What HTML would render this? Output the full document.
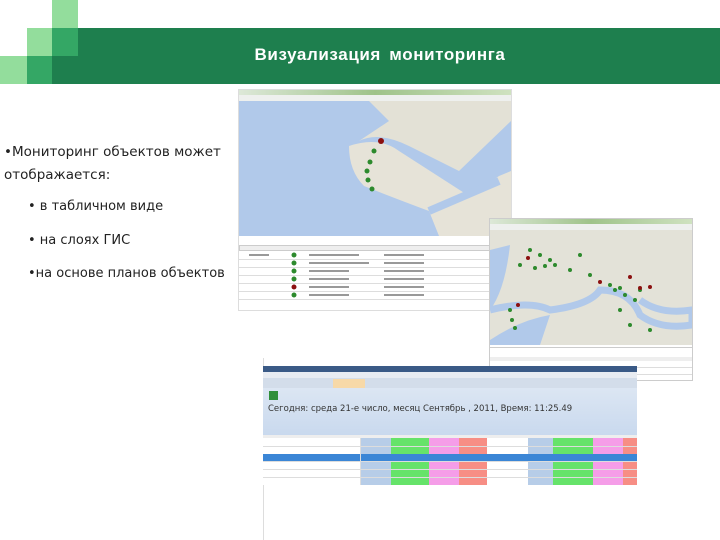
<!DOCTYPE html>
<html><head><meta charset="utf-8"><style>
*{margin:0;padding:0;box-sizing:border-box}
body{width:720px;height:540px;background:#fff;position:relative;overflow:hidden;font-family:"DejaVu Sans","Liberation Sans",sans-serif}
.a{position:absolute}
.t{position:absolute;font-size:13px;color:#222;white-space:nowrap}
.map{background:#dfe3d6}
.row{position:absolute;left:0;right:0;height:1px;background:#ddd}
</style></head><body>
<div class="a" style="left:52px;top:0;width:26px;height:28px;background:#93dd9c"></div>
<div class="a" style="left:27px;top:28px;width:25px;height:28px;background:#93dd9c"></div>
<div class="a" style="left:0;top:56px;width:27px;height:28px;background:#93dd9c"></div>
<div class="a" style="left:27px;top:56px;width:25px;height:28px;background:#34a765"></div>
<div class="a" style="left:52px;top:28px;width:668px;height:56px;background:#1e7f4e"></div>
<div class="a" style="left:52px;top:28px;width:26px;height:28px;background:#34a765"></div>
<div class="a" style="left:240px;top:45px;width:280px;text-align:center;color:#fff;font-family:'Liberation Sans',sans-serif;font-weight:bold;font-size:17px;letter-spacing:0.6px;word-spacing:3px">Визуализация мониторинга</div>

<div class="t" style="left:4px;top:144px;font-size:13.5px">•Мониторинг объектов может</div>
<div class="t" style="left:4px;top:167px;font-size:13.5px">отображается:</div>
<div class="t" style="left:28px;top:199px">• в табличном виде</div>
<div class="t" style="left:28px;top:233px">• на слоях ГИС</div>
<div class="t" style="left:28px;top:266px">•на основе планов объектов</div>

<!-- screenshot 1 -->
<div class="a" style="left:238px;top:89px;width:274px;height:222px;background:#fff;border:1px solid #ddd">
 <div class="a" style="left:0;top:0;width:272px;height:5px;background:linear-gradient(90deg,#dde8d8,#9fc38a,#cfe2c0)"></div>
 <div class="a" style="left:0;top:5px;width:272px;height:6px;background:#eef0ee"></div>
 <div class="a map" style="left:0;top:11px;width:272px;height:135px;background:#b1c9ea">
  <svg width="272" height="135" style="position:absolute;left:0;top:0"><path d="M120 40 Q140 30 170 45 L220 70 L272 20 L272 0 L130 0 L150 20Z" fill="#e3e1d6"/><path d="M110 45 Q140 35 160 50 L230 95 L260 75 L272 70 L272 135 L200 135 L190 110 Q150 95 125 85 Q110 70 110 45Z" fill="#e6e3d8"/><path d="M272 80 L200 135 L272 135Z" fill="#e6e3d8"/><path d="M190 110 L260 80" stroke="#b1c9ea" stroke-width="8" fill="none"/><circle cx="142" cy="40" r="3" fill="#8b1010"/><circle cx="135" cy="50" r="2.5" fill="#2d8a2d"/><circle cx="131" cy="61" r="2.5" fill="#2d8a2d"/><circle cx="128" cy="70" r="2.5" fill="#2d8a2d"/><circle cx="129" cy="79" r="2.5" fill="#2d8a2d"/><circle cx="133" cy="88" r="2.5" fill="#2d8a2d"/></svg>
 </div>
 <div class="a" style="left:0;top:155px;width:272px;height:6px;background:#eee;border:1px solid #ccc"></div>
 <div class="a" style="left:0;top:161px;width:272px;height:60px">
  <div class="row" style="top:8px"></div><div class="row" style="top:16px"></div><div class="row" style="top:24px"></div><div class="row" style="top:32px"></div><div class="row" style="top:40px"></div><div class="row" style="top:48px"></div>
  <svg width="272" height="60" style="position:absolute;left:0;top:0"><g fill="#2d8a2d"><circle cx="55" cy="4" r="2.5"/><circle cx="55" cy="12" r="2.5"/><circle cx="55" cy="20" r="2.5"/><circle cx="55" cy="28" r="2.5"/><circle cx="55" cy="44" r="2.5"/></g><circle cx="55" cy="36" r="2.5" fill="#8b1010"/><g fill="#999"><rect x="10" y="3" width="20" height="2"/><rect x="70" y="3" width="50" height="2"/><rect x="70" y="11" width="60" height="2"/><rect x="70" y="19" width="40" height="2"/><rect x="70" y="27" width="40" height="2"/><rect x="70" y="35" width="40" height="2"/><rect x="70" y="43" width="40" height="2"/><rect x="145" y="3" width="40" height="2"/><rect x="145" y="11" width="40" height="2"/><rect x="145" y="19" width="40" height="2"/><rect x="145" y="27" width="40" height="2"/><rect x="145" y="35" width="40" height="2"/><rect x="145" y="43" width="40" height="2"/></g></svg>
 </div>
</div>

<!-- screenshot 2 -->
<div class="a" style="left:489px;top:218px;width:204px;height:163px;background:#fff;border:1px solid #ccc">
 <div class="a" style="left:0;top:0;width:202px;height:5px;background:linear-gradient(90deg,#dde8d8,#9fc38a,#cfe2c0)"></div>
 <div class="a" style="left:0;top:5px;width:202px;height:6px;background:#eef0ee"></div>
 <div class="a" style="left:0;top:11px;width:202px;height:115px;background:#e3e2d8">
  <svg width="202" height="115" style="position:absolute;left:0;top:0"><path d="M0 20 L20 15 Q15 60 0 80Z" fill="#b1c9ea"/><path d="M0 80 Q40 70 60 80 Q100 75 110 60 Q140 60 150 85 Q170 100 202 95 L202 80 Q170 85 150 70" fill="none" stroke="#b1c9ea" stroke-width="7"/><path d="M0 110 Q30 90 60 85 L50 115 L0 115Z" fill="#b1c9ea"/><g fill="#2d8a2d"><circle cx="40" cy="20" r="2"/><circle cx="50" cy="25" r="2"/><circle cx="60" cy="30" r="2"/><circle cx="30" cy="35" r="2"/><circle cx="45" cy="38" r="2"/><circle cx="55" cy="36" r="2"/><circle cx="65" cy="35" r="2"/><circle cx="80" cy="40" r="2"/><circle cx="120" cy="55" r="2"/><circle cx="125" cy="60" r="2"/><circle cx="130" cy="58" r="2"/><circle cx="135" cy="65" r="2"/><circle cx="145" cy="70" r="2"/><circle cx="150" cy="60" r="2"/><circle cx="20" cy="80" r="2"/><circle cx="22" cy="90" r="2"/><circle cx="25" cy="98" r="2"/><circle cx="130" cy="80" r="2"/><circle cx="140" cy="95" r="2"/><circle cx="160" cy="100" r="2"/><circle cx="100" cy="45" r="2"/><circle cx="90" cy="25" r="2"/></g><g fill="#8b1010"><circle cx="38" cy="28" r="2"/><circle cx="110" cy="52" r="2"/><circle cx="140" cy="47" r="2"/><circle cx="150" cy="58" r="2"/><circle cx="160" cy="57" r="2"/><circle cx="28" cy="75" r="2"/></g></svg>
 </div>
 <div class="a" style="left:0;top:128px;width:202px;height:1px;background:#ccc"></div>
 <div class="a" style="left:0;top:138px;width:202px;height:4px;background:#eee"></div>
 <div class="row" style="top:148px"></div><div class="row" style="top:155px"></div>
</div>

<!-- screenshot 3 -->
<div class="a" style="left:263px;top:358px;width:1px;height:182px;background:#ddd"></div>
<div class="a" style="left:263px;top:366px;width:374px;height:6px;background:#3a5a86"></div>
<div class="a" style="left:263px;top:372px;width:374px;height:16px;background:#e8ecf2"></div>
<div class="a" style="left:263px;top:378px;width:374px;height:10px;background:#d3ddea"></div>
<div class="a" style="left:333px;top:379px;width:32px;height:9px;background:#f7d9a8"></div>
<div class="a" style="left:263px;top:388px;width:374px;height:47px;background:linear-gradient(#dce6f3,#c9d9ee)"></div>
<div class="a" style="left:269px;top:391px;width:9px;height:9px;background:#2f8f3a"></div>
<div class="t" style="left:268px;top:404px;font-size:8.5px;color:#333">Сегодня: среда 21-е число, месяц Сентябрь , 2011, Время: 11:25.49</div>
<div class="a" style="left:263px;top:435px;width:374px;height:50px;background:#fff">
 <svg width="374" height="50" style="position:absolute;left:0;top:0">
  <rect x="0" y="0" width="374" height="3" fill="#eee"/>
  <g>
   <rect x="98" y="3" width="30" height="8" fill="#b7cde8"/><rect x="128" y="3" width="38" height="8" fill="#66e36a"/><rect x="166" y="3" width="30" height="8" fill="#f59de8"/><rect x="196" y="3" width="28" height="8" fill="#f78e85"/>
   <rect x="265" y="3" width="25" height="8" fill="#b7cde8"/><rect x="290" y="3" width="40" height="8" fill="#66e36a"/><rect x="330" y="3" width="30" height="8" fill="#f59de8"/><rect x="360" y="3" width="14" height="8" fill="#f78e85"/>
  </g>
  <g>
   <rect x="98" y="11" width="30" height="39" fill="#b7cde8"/><rect x="128" y="11" width="38" height="39" fill="#66e36a"/><rect x="166" y="11" width="30" height="39" fill="#f59de8"/><rect x="196" y="11" width="28" height="39" fill="#f78e85"/>
   <rect x="265" y="11" width="25" height="39" fill="#b7cde8"/><rect x="290" y="11" width="40" height="39" fill="#66e36a"/><rect x="330" y="11" width="30" height="39" fill="#f59de8"/><rect x="360" y="11" width="14" height="39" fill="#f78e85"/>
  </g>
  <rect x="0" y="19" width="374" height="7" fill="#3b86d6"/>
  <g fill="#ddd"><rect x="0" y="11" width="374" height="1"/><rect x="0" y="26" width="374" height="1"/><rect x="0" y="34" width="374" height="1"/><rect x="0" y="42" width="374" height="1"/><rect x="0" y="50" width="374" height="1"/><rect x="97" y="3" width="1" height="47"/></g>
 </svg>
</div>
</body></html>
